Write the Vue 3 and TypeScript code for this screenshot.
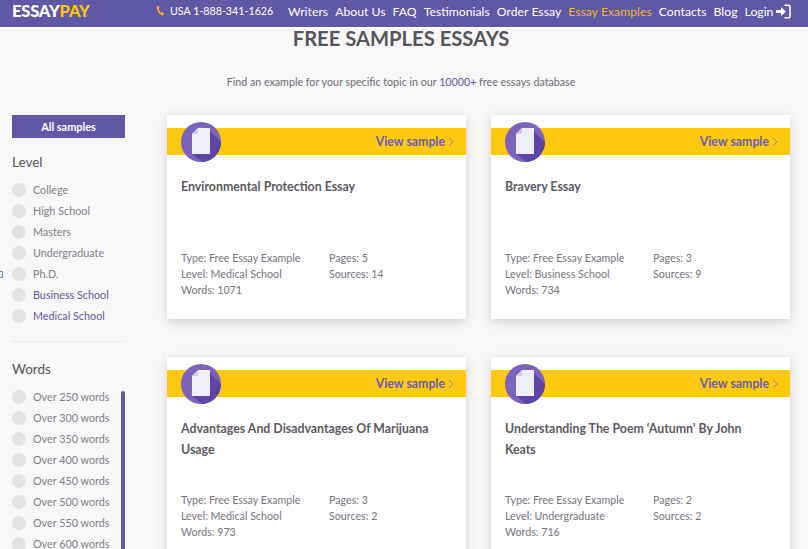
<script setup lang="ts">
interface Card { title: string; type: string; level: string; words: number; pages: number; sources: number }
interface Option { label: string; active?: boolean }

const nav: { label: string; active?: boolean }[] = [
  { label: 'Writers' }, { label: 'About Us' }, { label: 'FAQ' }, { label: 'Testimonials' },
  { label: 'Order Essay' }, { label: 'Essay Examples', active: true }, { label: 'Contacts' }, { label: 'Blog' },
]
const levels: Option[] = [
  { label: 'College' }, { label: 'High School' }, { label: 'Masters' }, { label: 'Undergraduate' },
  { label: 'Ph.D.' }, { label: 'Business School', active: true }, { label: 'Medical School', active: true },
]
const words: Option[] = [250, 300, 350, 400, 450, 500, 550, 600].map((n) => ({ label: `Over ${n} words` }))
const cards: Card[] = [
  { title: 'Environmental Protection Essay', type: 'Free Essay Example', level: 'Medical School', words: 1071, pages: 5, sources: 14 },
  { title: 'Bravery Essay', type: 'Free Essay Example', level: 'Business School', words: 734, pages: 3, sources: 9 },
  { title: 'Advantages And Disadvantages Of Marijuana Usage', type: 'Free Essay Example', level: 'Medical School', words: 973, pages: 3, sources: 2 },
  { title: 'Understanding The Poem ‘Autumn’ By John Keats', type: 'Free Essay Example', level: 'Undergraduate', words: 716, pages: 2, sources: 2 },
]
</script>

<template>
  <div class="page">
    <header class="top">
      <div class="logo">ESSAY<span>PAY</span></div>
      <div class="phone">
        <svg width="9" height="11" viewBox="0 0 10 12"><path d="M1.600 1.200 3 .8l1 2.600-1 .9c.3 1.600 1.300 3.200 2.600 4.100l1.100-.7L9 9.500l-.8 1.400c-.5.500-1.400.5-2.200.1C3 9.600 .8 6 .8 3c0-.8.300-1.400.8-1.800z" fill="#f0b429"/></svg>
        <span>USA 1-888-341-1626</span>
      </div>
      <nav class="nav">
        <a v-for="n in nav" :key="n.label" :class="{ on: n.active }">{{ n.label }}</a>
        <a class="login">Login
          <svg width="15" height="15" viewBox="0 0 15 15"><path d="M0 6h5V3l5 4.500L5 12V9H0z" fill="#fff"/><path d="M8.500 1.200h4a1.500 1.500 0 0 1 1.500 1.500v9.600a1.500 1.500 0 0 1-1.500 1.500h-4" fill="none" stroke="#fff" stroke-width="1.500"/></svg>
        </a>
      </nav>
    </header>

    <h1 class="title">FREE SAMPLES ESSAYS</h1>
    <p class="sub">Find an example for your specific topic in our <span>10000+</span> free essays database</p>

    <div class="mark"></div>

    <div class="body">
      <aside class="side">
        <button class="all">All samples</button>
        <h3 class="head">Level</h3>
        <ul class="opts">
          <li v-for="o in levels" :key="o.label" :class="{ on: o.active }"><i></i>{{ o.label }}</li>
        </ul>
        <hr class="rule" />
        <h3 class="head words-head">Words</h3>
        <div class="scroll">
          <ul class="opts">
            <li v-for="o in words" :key="o.label"><i></i>{{ o.label }}</li>
          </ul>
          <div class="thumb"></div>
        </div>
      </aside>

      <main class="grid">
        <article v-for="c in cards" :key="c.title" class="card">
          <div class="band">
            <div class="badge">
              <svg width="40" height="40" viewBox="0 0 40 40">
                <defs><clipPath id="c"><circle cx="20" cy="20" r="20"/></clipPath></defs>
                <circle cx="20" cy="20" r="20" fill="#7b63bb"/>
                <path d="M26 6 44 24 30 46 11 32z" fill="#5f45a3" clip-path="url(#c)"/>
                <path d="M17 6h12v26H11V12z" fill="#efedf7"/>
                <path d="M17 6v6h-6z" fill="#cfc8e6"/>
              </svg>
            </div>
            <a class="view">View sample <svg width="6" height="10" viewBox="0 0 6 10"><path d="M1 1l4 4-4 4" fill="none" stroke="#8f86b0" stroke-width="1"/></svg></a>
          </div>
          <h2 class="name">{{ c.title }}</h2>
          <div class="meta">
            <div class="m1">
              <div>Type: {{ c.type }}</div>
              <div>Level: {{ c.level }}</div>
              <div>Words: {{ c.words }}</div>
            </div>
            <div>
              <div>Pages: {{ c.pages }}</div>
              <div>Sources: {{ c.sources }}</div>
            </div>
          </div>
        </article>
      </main>
    </div>
  </div>
</template>

<style>
html, body { margin: 0; background: #f8f8f8; }
</style>

<style scoped>
.page {
  position: relative;
  width: 808px;
  height: 549px;
  overflow: hidden;
  background: #f8f8f8;
  font-family: Lato, "Open Sans", sans-serif;
  color: #6c6c74;
}
.top {
  height: 27px;
  background: #5f58a5;
  border-bottom: 1px solid #fff;
  display: flex;
  align-items: center;
  padding-left: 12px;
  color: #fff;
}
.logo { font-size: 16.500px; font-weight: 900; letter-spacing: -0.2px; width: 144px; margin-top: -6px; white-space: nowrap; }
.logo span { color: #fcc30f; }
.phone { display: flex; align-items: center; gap: 5px; font-size: 10.700px; width: 132px; margin-top: -6px; white-space: nowrap; }
.nav { display: flex; align-items: center; gap: 7px; font-size: 12.250px; margin-top: -4px; }
.nav a { color: #fff; white-space: nowrap; }
.nav a.on { color: #f5b52e; }
.login { display: flex; align-items: center; gap: 3px; }
.title {
  margin: -2px 0 0;
  text-align: center;
  font-size: 20.200px;
  line-height: 24px;
  font-weight: 700;
  color: #55555a;
  width: 802px;
}
.sub {
  margin: 24px 0 0;
  text-align: center;
  font-size: 10.700px;
  line-height: 16px;
  width: 802px;
}
.sub span { color: #5f58a5; }
.mark {
  position: absolute;
  left: 0;
  top: 271px;
  width: 2px;
  height: 5px;
  border: 1px solid #5b8fc4;
  border-left: none;
}
.body {
  display: flex;
  align-items: flex-start;
  padding: 25px 0 0 12px;
}
.side { width: 113px; flex: none; }
.all {
  display: block;
  width: 113px;
  height: 23px;
  padding: 0 0 1px;
  border: none;
  background: #5f58a5;
  color: #fff;
  font: 700 10.900px Lato, sans-serif;
}
.head { margin: 15px 0 8px; font-size: 13.500px; line-height: 18px; font-weight: 400; color: #55555a; }
.opts { list-style: none; margin: 0; padding: 0; }
.opts li {
  display: flex;
  align-items: center;
  height: 21px;
  font-size: 10.800px;
  white-space: nowrap;
  color: #7f7f8a;
}
.opts li.on { color: #5f58a5; }
.opts i {
  width: 14px;
  height: 14px;
  border-radius: 50%;
  background: #e3e3e3;
  margin-right: 7px;
  flex: none;
}
.rule { margin: 15px 0 0; border: none; border-top: 1px solid #e9e9e9; }
.words-head { margin-top: 18px; margin-bottom: 8px; }
.scroll { position: relative; }
.thumb {
  position: absolute;
  right: 0;
  top: 5px;
  width: 4px;
  height: 400px;
  background: #5f58a5;
  border-radius: 2px;
}
.grid {
  display: grid;
  grid-template-columns: 299px 299px;
  column-gap: 25px;
  row-gap: 38px;
  margin-left: 42px;
  align-content: start;
}
.card {
  height: 204px;
  background: #fff;
  box-shadow: 0 3px 10px rgba(0, 0, 0, 0.16);
  display: flex;
  flex-direction: column;
}
.band {
  position: relative;
  margin-top: 13px;
  height: 27px;
  background: #fcc90f;
  display: flex;
  align-items: center;
  justify-content: flex-end;
  padding-right: 12px;
  flex: none;
}
.badge { position: absolute; left: 14px; top: -6px; width: 40px; height: 40px; }
.badge svg { display: block; }
.view {
  font-size: 12.300px;
  font-weight: 700;
  color: #6a5fa8;
  display: flex;
  align-items: center;
  gap: 3px;
}
.name {
  margin: 21px 30px 0 14px;
  font-size: 12.350px;
  line-height: 21px;
  height: 42px;
  font-weight: 700;
  color: #5a5a62;
}
.meta {
  margin: 32px 14px 0;
  display: flex;
  font-size: 10.700px;
  line-height: 16px;
  color: #75757d;
}
.m1 { width: 148px; }
</style>
